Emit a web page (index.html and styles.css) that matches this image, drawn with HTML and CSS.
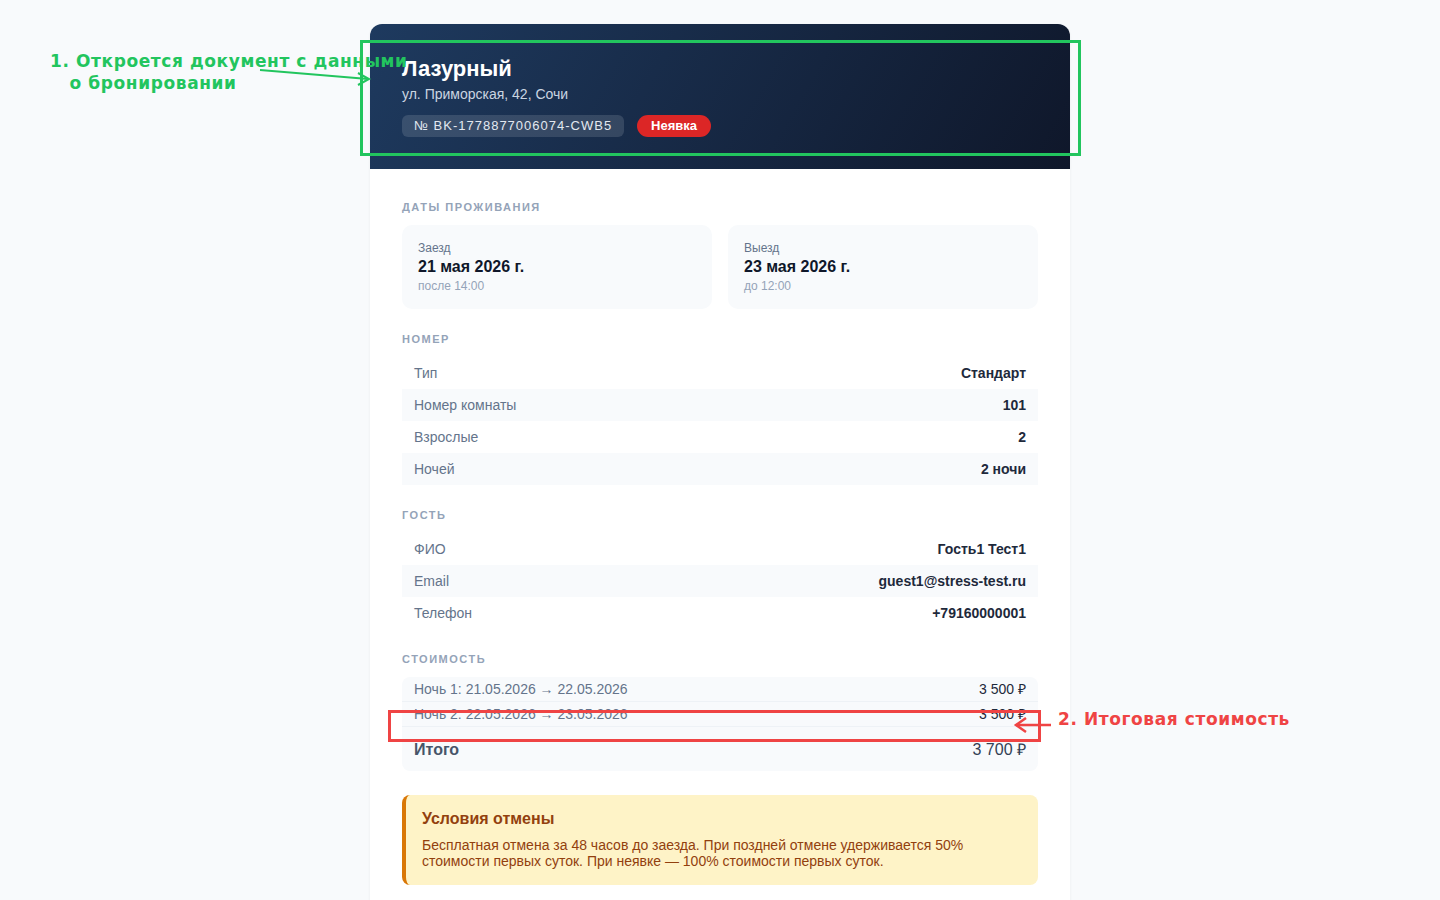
FILE: index.html
```html
<!DOCTYPE html>
<html lang="ru">
  <head>
    <meta charset="UTF-8" />
    <meta name="viewport" content="width=device-width, initial-scale=1.0" />
    <title>Бронирование</title>
    <link rel="stylesheet" href="styles.css">
  </head>

  <body>
    <div class="card">
      <header class="head">
        <h1>Лазурный</h1>
        <p class="address">ул. Приморская, 42, Сочи</p>
        <div class="badges">
          <span class="badge-id">№ BK-1778877006074-CWB5</span>
          <span class="badge-status">Неявка</span>
        </div>
      </header>

      <main class="body">
        <section>
          <h3>Даты проживания</h3>
          <div class="dates">
            <div class="date">
              <span class="date-label">Заезд</span>
              <span class="date-value">21 мая 2026 г.</span>
              <span class="date-note">после 14:00</span>
            </div>
            <div class="date">
              <span class="date-label">Выезд</span>
              <span class="date-value">23 мая 2026 г.</span>
              <span class="date-note">до 12:00</span>
            </div>
          </div>
        </section>

        <section>
          <h3>Номер</h3>
          <div class="rows">
            <div class="row"><span>Тип</span><b>Стандарт</b></div>
            <div class="row"><span>Номер комнаты</span><b>101</b></div>
            <div class="row"><span>Взрослые</span><b>2</b></div>
            <div class="row"><span>Ночей</span><b>2 ночи</b></div>
          </div>
        </section>

        <section>
          <h3>Гость</h3>
          <div class="rows">
            <div class="row"><span>ФИО</span><b>Гость1 Тест1</b></div>
            <div class="row"><span>Email</span><b>guest1@stress-test.ru</b></div>
            <div class="row"><span>Телефон</span><b>+79160000001</b></div>
          </div>
        </section>

        <section>
          <h3>Стоимость</h3>
          <div class="prices">
            <div class="night"><span>Ночь 1: 21.05.2026 → 22.05.2026</span><span class="sum">3 500 ₽</span></div>
            <div class="night"><span>Ночь 2: 22.05.2026 → 23.05.2026</span><span class="sum">3 500 ₽</span></div>
            <div class="total"><b>Итого</b><span>3 700 ₽</span></div>
          </div>
        </section>

        <div class="policy">
          <h4>Условия отмены</h4>
          <p>Бесплатная отмена за 48 часов до заезда. При поздней отмене удерживается 50% стоимости первых суток. При неявке — 100% стоимости первых суток.</p>
        </div>
      </main>
    </div>

    <!-- annotations drawn over the page -->
    <svg class="marks" width="1440" height="900" viewBox="0 0 1440 900">
      <rect x="361.5" y="41.5" width="718" height="113" fill="none" stroke="#22c55e" stroke-width="3" />
      <line x1="260" y1="70" x2="368" y2="79" stroke="#22c55e" stroke-width="2" />
      <path d="M358 73 L369 79 L358 85" fill="none" stroke="#22c55e" stroke-width="2" />
      <rect x="389.5" y="711.5" width="650" height="29" fill="none" stroke="#ef4444" stroke-width="3" />
      <line x1="1051" y1="725" x2="1017" y2="725" stroke="#ef4444" stroke-width="2.5" />
      <path d="M1026 718 L1016 725 L1026 732" fill="none" stroke="#ef4444" stroke-width="2.5" />
    </svg>
    <div class="note note-green">1. Откроется документ с данными<br />&nbsp;&nbsp;&nbsp;о бронировании</div>
    <div class="note note-red">2. Итоговая стоимость</div>
  </body>
</html>
```

FILE: styles.css
```css
body {
  margin: 0;
  background: #f8fafc;
  font-family: "Liberation Sans", Arial, sans-serif;
  color: #0f172a;
}

.card {
  width: 700px;
  margin: 24px auto 0;
  background: #fff;
  border-radius: 12px 12px 0 0;
  overflow: hidden;
  box-shadow: 0 1px 3px rgba(15, 23, 42, 0.06);
}

.head {
  padding: 32px 32px 32px;
  background: linear-gradient(120deg, #1e3a5f 0%, #0f172a 100%);
  color: #fff;
}

.head h1 {
  margin: 0;
  font-size: 22px;
  line-height: 26px;
  font-weight: 700;
}

.address {
  margin: 4px 0 0;
  font-size: 14px;
  line-height: 16px;
  color: #cbd5e1;
}

.badges {
  display: flex;
  gap: 13px;
  margin-top: 13px;
}

.badge-id,
.badge-status {
  height: 22px;
  line-height: 22px;
  font-size: 13px;
}

.badge-id {
  padding: 0 12px;
  border-radius: 6px;
  background: rgba(255, 255, 255, 0.13);
  color: #e2e8f0;
  letter-spacing: 1px;
}

.badge-status {
  padding: 0 14px;
  border-radius: 11px;
  background: #dc2626;
  font-weight: 700;
}

.body {
  padding: 32px 32px 40px;
}

section {
  margin-bottom: 24px;
}

h3 {
  margin: 0 0 11px;
  font-size: 11px;
  line-height: 13px;
  font-weight: 700;
  text-transform: uppercase;
  letter-spacing: 1.5px;
  color: #94a3b8;
}

.dates {
  display: grid;
  grid-template-columns: 1fr 1fr;
  gap: 16px;
}

.date {
  display: flex;
  flex-direction: column;
  padding: 16px;
  border-radius: 10px;
  background: #f8fafc;
}

.date-label {
  font-size: 12px;
  line-height: 14px;
  color: #64748b;
}

.date-value {
  margin-top: 2px;
  font-size: 16px;
  line-height: 20px;
  font-weight: 700;
  color: #0f172a;
}

.date-note {
  margin-top: 2px;
  font-size: 12px;
  line-height: 14px;
  color: #94a3b8;
}

.row {
  display: flex;
  justify-content: space-between;
  align-items: center;
  height: 32px;
  padding: 0 12px;
  font-size: 14px;
  color: #64748b;
}

.row:nth-child(even) {
  background: #f8fafc;
}

.row b {
  color: #1e293b;
}

.prices {
  border-radius: 8px;
  background: #f8fafc;
  overflow: hidden;
}

.night {
  display: flex;
  justify-content: space-between;
  padding: 4px 12px;
  font-size: 14px;
  line-height: 16px;
  color: #64748b;
  border-bottom: 1px solid #eef2f6;
}

.night:last-of-type {
  border-bottom: 2px solid #e2e8f0;
}

.sum {
  color: #1e293b;
}

.total {
  display: flex;
  justify-content: space-between;
  padding: 13px 12px 11px;
  font-size: 16px;
  line-height: 20px;
  color: #475569;
}

.total span {
  color: #334155;
}

.policy {
  margin-top: 24px;
  padding: 16px;
  border-left: 4px solid #d97706;
  border-radius: 8px;
  background: #fef3c7;
  color: #92400e;
}

.policy h4 {
  margin: 0 0 10px;
  font-size: 16px;
  line-height: 16px;
  font-weight: 700;
}

.policy p {
  margin: 0;
  font-size: 14px;
  line-height: 16px;
}

.marks {
  position: absolute;
  top: 0;
  left: 0;
  pointer-events: none;
}

.note {
  position: absolute;
  font-family: "DejaVu Sans", sans-serif;
  font-weight: 700;
  font-size: 17px;
  line-height: 22px;
  letter-spacing: 0.6px;
  white-space: nowrap;
}

.note-green {
  top: 50px;
  left: 50px;
  color: #22c55e;
}

.note-red {
  top: 708px;
  left: 1058px;
  color: #ef4444;
}
```
